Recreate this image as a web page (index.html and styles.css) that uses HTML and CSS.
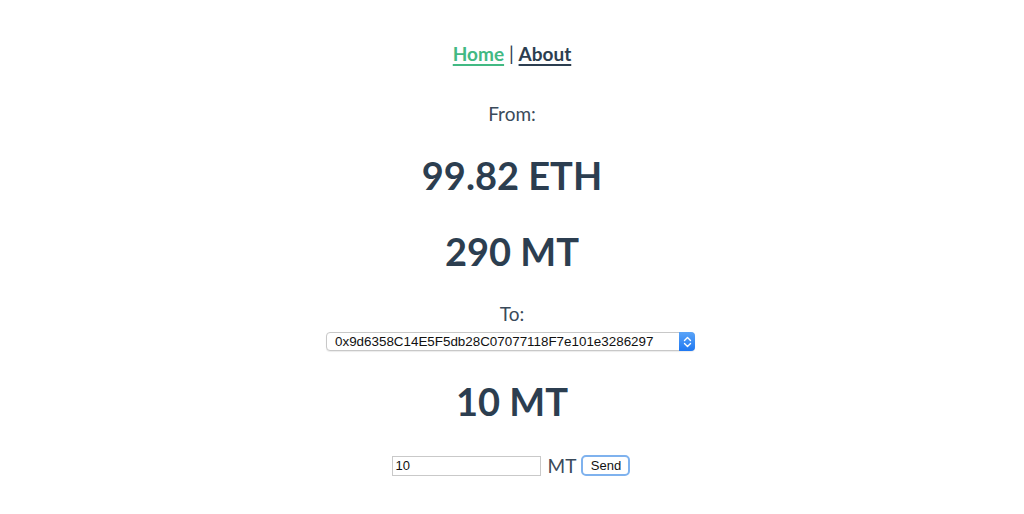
FILE: index.html
```html
<!DOCTYPE html>
<html>
<head>
<meta charset="utf-8">
<link rel="stylesheet" href="styles.css">
</head>
<body>
<div class="app">
  <nav class="nav"><a class="nav-link active" href="#">Home</a> | <a class="nav-link" href="#">About</a></nav>
  <p class="label label-from">From:</p>
  <h1 class="amount amount-eth">99.82 ETH</h1>
  <h1 class="amount amount-mt">290 MT</h1>
  <p class="label label-to">To:</p>
  <div class="select">
    <span class="select-text">0x9d6358C14E5F5db28C07077118F7e101e3286297</span>
    <span class="select-btn"><svg width="9" height="12" viewBox="0 0 9 12"><path d="M1.5 4.5 L4.5 1.5 L7.5 4.5 M1.5 7.5 L4.5 10.5 L7.5 7.5" fill="none" stroke="#fff" stroke-width="1.4" stroke-linecap="round" stroke-linejoin="round"/></svg></span>
  </div>
  <h1 class="amount amount-send">10 MT</h1>
  <div class="send-row">
    <span class="input">10</span>
    <span class="unit">MT</span>
    <span class="button">Send</span>
  </div>
</div>
</body>
</html>
```
FILE: styles.css
```css
html, body {
  margin: 0;
  padding: 0;
  background: #fff;
}
.app {
  font-family: Lato, "Noto Sans", sans-serif;
  color: #2c3e50;
  text-align: center;
  display: flex;
  flex-direction: column;
  align-items: center;
}
.nav {
  margin-top: 42px;
  height: 24px;
  line-height: 24px;
  font-size: 19px;
}
.nav-link {
  color: #2c3e50;
  font-weight: bold;
  text-decoration: underline;
  text-underline-offset: 3px;
  text-decoration-thickness: 2px;
}
.nav-link.active {
  color: #42b983;
}
.label {
  margin: 0;
  height: 20px;
  line-height: 20px;
  font-size: 19px;
  font-weight: normal;
  color: #3a4a5a;
}
.label-from { margin-top: 38px; }
.label-to { margin-top: 33px; }
.amount {
  margin: 0;
  height: 40px;
  line-height: 40px;
  font-size: 38px;
  font-weight: bold;
}
.amount-eth { margin-top: 31px; }
.amount-mt { margin-top: 36px; }
.amount-send { margin-top: 30px; }
.select {
  margin-top: 8px;
  margin-left: -3px;
  width: 369px;
  height: 19px;
  box-sizing: border-box;
  border: 1px solid #c8c8c8;
  border-radius: 4px;
  display: flex;
  align-items: center;
  justify-content: space-between;
  font-family: "Liberation Sans", Arial, sans-serif;
  font-size: 13.4px;
  color: #111;
  background: #fff;
  box-shadow: 0 1px 1px rgba(0,0,0,0.08);
}
.select-text {
  padding-left: 8px;
  line-height: 17px;
}
.select-btn {
  width: 16px;
  height: 19px;
  margin: -1px -1px -1px 0;
  border-radius: 0 4px 4px 0;
  background: linear-gradient(#5aa4f8, #1f78f2);
  display: flex;
  align-items: center;
  justify-content: center;
}
.send-row {
  margin-top: 34px;
  margin-left: -2px;
  height: 21px;
  display: flex;
  align-items: center;
}
.input {
  width: 149px;
  height: 20px;
  box-sizing: border-box;
  border: 1px solid #c9c9c9;
  font-family: "Liberation Sans", Arial, sans-serif;
  font-size: 13px;
  line-height: 18px;
  text-align: left;
  padding-left: 3px;
  color: #111;
}
.unit {
  margin-left: 7px;
  font-size: 19px;
  line-height: 20px;
  color: #3a4a5a;
}
.button {
  margin-left: 5px;
  width: 49px;
  height: 21px;
  box-sizing: border-box;
  border: 2px solid #7fb2ee;
  border-radius: 5px;
  font-family: "Liberation Sans", Arial, sans-serif;
  font-size: 13px;
  line-height: 17px;
  color: #111;
  background: #fff;
}
```
